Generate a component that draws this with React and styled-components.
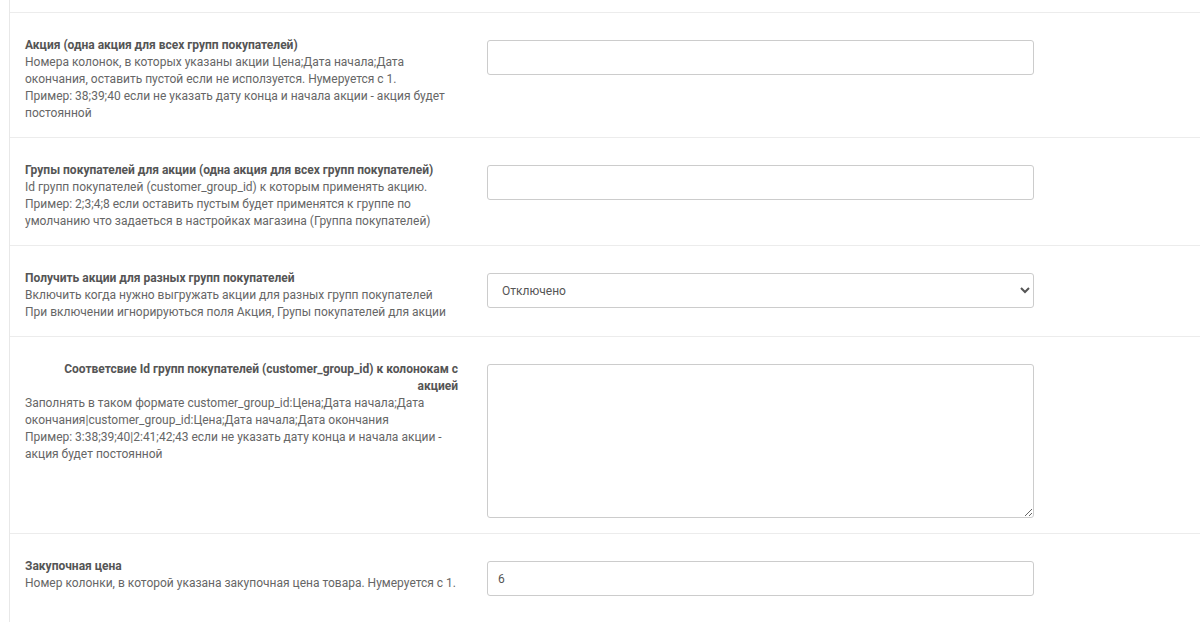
import React from "react";
import styled, { createGlobalStyle } from "styled-components";

const Global = createGlobalStyle`
  html, body { margin: 0; padding: 0; background: #fff; }
  body { font-family: Roboto, "Noto Sans", sans-serif; font-size: 12px; color: #666; }
  * { box-sizing: border-box; }
`;

const Page = styled.div`
  padding-left: 9px;
  height: 622px;
  overflow: hidden;
`;

const Panel = styled.div`
  border-left: 1px solid #e8e8e8;
  padding-top: 12px;
  min-height: 622px;
`;

const Row = styled.div`
  display: flex;
  align-items: flex-start;
  border-top: 1px solid #ececec;
  padding: 24px 0 15px 15px;
`;

const LabelCol = styled.div`
  width: 433px;
  flex: none;
  line-height: 17px;
`;

const Title = styled.label`
  display: inline-block;
  max-width: 100%;
  text-align: right;
  font-weight: 700;
  color: #555;
`;

const Desc = styled.div`
  color: #666;
`;

const ControlCol = styled.div`
  width: 547px;
  flex: none;
  margin-left: 29px;
  padding-top: 3px;
`;

const fieldBase = `
  display: block;
  width: 100%;
  border: 1px solid #ccc;
  border-radius: 3px;
  background: #fff;
  font-family: Roboto, "Noto Sans", sans-serif;
  font-size: 12px;
  color: #555;
  padding: 0 10px;
  outline: none;
`;

const Input = styled.input`
  ${fieldBase}
  height: 35px;
`;

const Select = styled.select`
  ${fieldBase}
  height: 35px;
  padding-right: 8px;
`;

const TextArea = styled.textarea`
  ${fieldBase}
  height: 154px;
  padding: 8px 10px;
  resize: vertical;
`;

const rows = [
  {
    title: "Акция (одна акция для всех групп покупателей)",
    desc: [
      "Номера колонок, в которых указаны акции Цена;Дата начала;Дата окончания, оставить пустой если не исползуется. Нумеруется с 1.",
      "Пример: 38;39;40 если не указать дату конца и начала акции - акция будет постоянной",
    ],
    control: "input",
    value: "",
  },
  {
    title: "Групы покупателей для акции (одна акция для всех групп покупателей)",
    desc: [
      "Id групп покупателей (customer_group_id) к которым применять акцию.",
      "Пример: 2;3;4;8 если оставить пустым будет применятся к группе по умолчанию что задаеться в настройках магазина (Группа покупателей)",
    ],
    control: "input",
    value: "",
  },
  {
    title: "Получить акции для разных групп покупателей",
    desc: [
      "Включить когда нужно выгружать акции для разных групп покупателей",
      "При включении игнорируються поля Акция, Групы покупателей для акции",
    ],
    control: "select",
  },
  {
    title: "Соответсвие Id групп покупателей (customer_group_id) к колонокам с акцией",
    desc: [
      "Заполнять в таком формате customer_group_id:Цена;Дата начала;Дата окончания|customer_group_id:Цена;Дата начала;Дата окончания",
      "Пример: 3:38;39;40|2:41;42;43 если не указать дату конца и начала акции - акция будет постоянной",
    ],
    control: "textarea",
  },
  {
    title: "Закупочная цена",
    desc: ["Номер колонки, в которой указана закупочная цена товара. Нумеруется с 1."],
    control: "input",
    value: "6",
  },
];

function Control({ row }) {
  if (row.control === "select") {
    return (
      <Select defaultValue="0">
        <option value="0">Отключено</option>
        <option value="1">Включено</option>
      </Select>
    );
  }
  if (row.control === "textarea") return <TextArea defaultValue="" />;
  return <Input type="text" defaultValue={row.value} />;
}

export default function App() {
  return (
    <>
      <Global />
      <Page>
        <Panel>
          {rows.map((row, i) => (
            <Row key={i}>
              <LabelCol>
                <Title>{row.title}</Title>
                {row.desc.map((d, j) => (
                  <Desc key={j}>{d}</Desc>
                ))}
              </LabelCol>
              <ControlCol>
                <Control row={row} />
              </ControlCol>
            </Row>
          ))}
        </Panel>
      </Page>
    </>
  );
}
